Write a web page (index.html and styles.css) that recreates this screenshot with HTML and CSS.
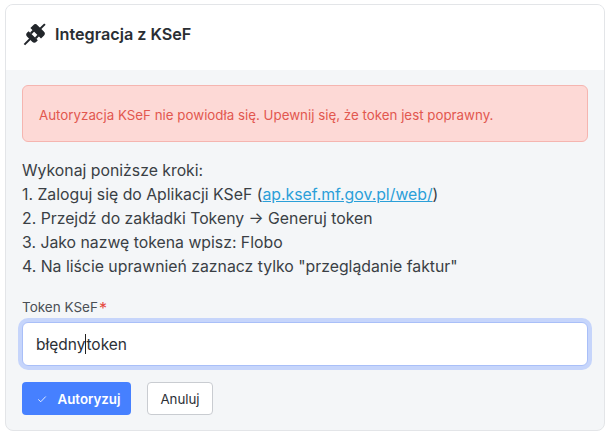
FILE: index.html
```html
<!DOCTYPE html>
<html lang="pl">
<head>
    <meta charset="UTF-8">
    <title>Integracja z KSeF</title>
    <link rel="stylesheet" href="styles.css">
</head>
<body>
    <div class="card">
        <!-- Nagłówek -->
        <div class="card-header">
            <svg class="plug-icon" viewBox="0 0 24 24" width="24" height="24" fill="#22262b">
                <g transform="rotate(-45 12 12)">
                    <rect x="-3" y="11" width="8" height="2"/>
                    <path d="M9.500 5.500v13H7.500a3 3 0 0 1-3-3v-7a3 3 0 0 1 3-3z"/>
                    <rect x="9.500" y="7.500" width="4" height="2.200"/>
                    <rect x="9.500" y="14.300" width="4" height="2.200"/>
                    <path d="M13 4.500h4a3 3 0 0 1 3 3v9a3 3 0 0 1-3 3h-4z"/>
                    <rect x="19" y="11" width="7" height="2"/>
                </g>
            </svg>
            <h1 class="card-title">Integracja z KSeF</h1>
        </div>
        <div class="card-body">
            <!-- Komunikat o błędzie -->
            <div class="alert">Autoryzacja KSeF nie powiodła się. Upewnij się, że token jest poprawny.</div>
            <div class="steps">
                <div>Wykonaj poniższe kroki:</div>
                <div>1. Zaloguj się do Aplikacji KSeF (<a href="#">ap.ksef.mf.gov.pl/web/</a>)</div>
                <div>2. Przejdź do zakładki Tokeny → Generuj token</div>
                <div>3. Jako nazwę tokena wpisz: Flobo</div>
                <div>4. Na liście uprawnień zaznacz tylko "przeglądanie faktur"</div>
            </div>
            <label class="field-label">Token KSeF<span class="required">*</span></label>
            <div class="field-input">błędny<span class="caret"></span>token</div>
            <div class="actions">
                <button class="btn btn-primary">
                    <svg viewBox="0 0 12 12" width="10" height="10" fill="none" stroke="#fff" stroke-width="1">
                        <path d="M1.500 6.500l3 2.800 6-6.300"/>
                    </svg>
                    Autoryzuj
                </button>
                <button class="btn btn-default">Anuluj</button>
            </div>
        </div>
    </div>
</body>
</html>
```

FILE: styles.css
```css
* {
    box-sizing: border-box;
}

body {
    margin: 0;
    padding: 4px 3px 6px 5px;
    background: #fff;
    font-family: Inter, "Liberation Sans", sans-serif;
    color: #3a3f45;
}

.card {
    border: 1px solid #e3e5e8;
    border-radius: 8px;
    overflow: hidden;
    background: #f4f6f8;
}

.card-header {
    height: 65px;
    display: flex;
    align-items: center;
    gap: 8px;
    padding-left: 17px;
    padding-bottom: 8px;
    background: #fff;
}

.plug-icon {
    flex: none;
    overflow: visible;
}

.card-title {
    margin: 0;
    font-size: 16.2px;
    font-weight: 600;
    color: #2a2e33;
}

.card-body {
    padding: 15px 16px 15px 16px;
}

.alert {
    height: 57px;
    display: flex;
    align-items: center;
    padding-left: 16px;
    padding-top: 2px;
    background: #fdd9d6;
    border: 1px solid #f5b5b0;
    border-radius: 6px;
    font-size: 13.33px;
    color: #e2574f;
}

.steps {
    margin-top: 17px;
    font-size: 15.8px;
    line-height: 24px;
}

.steps a {
    color: #2b9fd8;
}

.field-label {
    display: block;
    margin-top: 19px;
    font-size: 13.5px;
    line-height: 18px;
    color: #4a4f55;
}

.required {
    margin-left: 1px;
    font-size: 16px;
    line-height: 0;
    vertical-align: -2px;
    color: #e5483d;
}

.field-input {
    height: 44px;
    margin-top: 6px;
    padding-left: 13px;
    display: flex;
    align-items: center;
    background: #fff;
    border: 1px solid #a9bff8;
    border-radius: 6px;
    box-shadow: 0 0 0 4px #c6d5fb;
    font-size: 15.5px;
    color: #2c3036;
}

.caret {
    width: 0;
    height: 20px;
    border-left: 1px solid #222;
}

.actions {
    margin-top: 16px;
    display: flex;
    gap: 16px;
}

.btn {
    height: 33px;
    border-radius: 4px;
    font-family: inherit;
    font-size: 13.3px;
}

.btn-primary {
    width: 109px;
    display: flex;
    align-items: center;
    justify-content: center;
    gap: 11px;
    padding: 0 0 0 4px;
    background: #4680ff;
    border: none;
    color: #fff;
    font-weight: 600;
}

.btn-default {
    width: 66px;
    background: #fff;
    border: 1px solid #c9ccd1;
    color: #2c3036;
}
```
